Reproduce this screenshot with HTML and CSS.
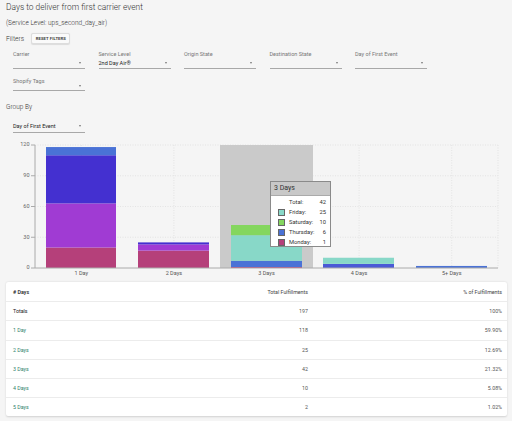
FILE: index.html
```html
<!DOCTYPE html>
<html>
<head>
<meta charset="utf-8">
<link rel="stylesheet" href="styles.css">
</head>
<body>
<div class="page">
  <h1 class="title">Days to deliver from first carrier event</h1>
  <p class="subtitle">(Service Level: ups_second_day_air)</p>
  <div class="filters-head">
    <span class="label-lg">Filters</span>
    <button class="btn">Reset Filters</button>
  </div>
  <div class="filters">
    <div class="field"><span class="field-label">Carrier</span><div class="field-input"><span class="value"></span><span class="arrow"></span></div></div>
    <div class="field"><span class="field-label">Service Level</span><div class="field-input"><span class="value">2nd Day Air®</span><span class="arrow"></span></div></div>
    <div class="field"><span class="field-label">Origin State</span><div class="field-input"><span class="value"></span><span class="arrow"></span></div></div>
    <div class="field"><span class="field-label">Destination State</span><div class="field-input"><span class="value"></span><span class="arrow"></span></div></div>
    <div class="field"><span class="field-label">Day of First Event</span><div class="field-input"><span class="value"></span><span class="arrow"></span></div></div>
    <div class="field field-compact"><span class="field-label">Shopify Tags</span><div class="field-input"><span class="value"></span><span class="arrow"></span></div></div>
  </div>
  <div class="group-by">Group By</div>
  <div class="group-select"><span class="value">Day of First Event</span><span class="arrow"></span></div>
</div>

<div class="chart">
  <svg class="chart-svg" width="512" height="142" viewBox="0 0 512 142">
    <g class="grid">
      <line x1="35" y1="6" x2="498" y2="6"/>
      <line x1="35" y1="36.75" x2="498" y2="36.75"/>
      <line x1="35" y1="67.5" x2="498" y2="67.5"/>
      <line x1="35" y1="98.25" x2="498" y2="98.25"/>
      <line x1="81.3" y1="6" x2="81.3" y2="129"/>
      <line x1="173.9" y1="6" x2="173.9" y2="129"/>
      <line x1="266.5" y1="6" x2="266.5" y2="129"/>
      <line x1="359.1" y1="6" x2="359.1" y2="129"/>
      <line x1="451.7" y1="6" x2="451.7" y2="129"/>
      <line x1="498" y1="6" x2="498" y2="129"/>
    </g>
    <rect x="220" y="6" width="93" height="123" fill="#cacaca"/>
    <!-- 1 Day -->
    <rect x="46" y="108.5" width="70" height="20.5" fill="#b5407a"/>
    <rect x="46" y="64.4" width="70" height="44.1" fill="#a03bd3"/>
    <rect x="46" y="16.25" width="70" height="48.15" fill="#4430d0"/>
    <rect x="46" y="8.05" width="70" height="8.2" fill="#4a72d6"/>
    <!-- 2 Days -->
    <rect x="138" y="111.6" width="71" height="17.4" fill="#b5407a"/>
    <rect x="138" y="105.4" width="71" height="6.2" fill="#a03bd3"/>
    <rect x="138" y="103.4" width="71" height="2" fill="#4430d0"/>
    <!-- 3 Days -->
    <rect x="231" y="128" width="71" height="1" fill="#b5407a"/>
    <rect x="231" y="121.8" width="71" height="6.2" fill="#4a72d6"/>
    <rect x="231" y="96.2" width="71" height="25.6" fill="#88d8c8"/>
    <rect x="231" y="86" width="71" height="10.2" fill="#84d65e"/>
    <!-- 4 Days -->
    <rect x="323" y="124.9" width="71" height="4.1" fill="#4a5ad6"/>
    <rect x="323" y="118.75" width="71" height="6.15" fill="#88d8c8"/>
    <!-- 5+ Days -->
    <rect x="416" y="126.95" width="71" height="2.05" fill="#4a72d6"/>
    <g class="axis">
      <line x1="35" y1="6" x2="35" y2="129"/>
      <line x1="35" y1="129" x2="498" y2="129"/>
      <line x1="31" y1="6" x2="35" y2="6"/>
      <line x1="31" y1="36.75" x2="35" y2="36.75"/>
      <line x1="31" y1="67.5" x2="35" y2="67.5"/>
      <line x1="31" y1="98.25" x2="35" y2="98.25"/>
      <line x1="31" y1="129" x2="35" y2="129"/>
    </g>
    <g class="ylabels">
      <text x="29.5" y="6">120</text>
      <text x="29.5" y="36.75">90</text>
      <text x="29.5" y="67.5">60</text>
      <text x="29.5" y="98.25">30</text>
      <text x="29.5" y="129">0</text>
    </g>
    <g class="xlabels">
      <text x="81.3" y="134.5">1 Day</text>
      <text x="173.9" y="134.5">2 Days</text>
      <text x="266.5" y="134.5">3 Days</text>
      <text x="359.1" y="134.5">4 Days</text>
      <text x="451.7" y="134.5">5+ Days</text>
    </g>
  </svg>
  <div class="tooltip">
    <div class="tooltip-head">3 Days</div>
    <div class="tooltip-body">
      <span></span><span class="tl">Total:</span><span class="tv">42</span>
      <span class="sw sw-fri"></span><span class="tl">Friday:</span><span class="tv">25</span>
      <span class="sw sw-sat"></span><span class="tl">Saturday:</span><span class="tv">10</span>
      <span class="sw sw-thu"></span><span class="tl">Thursday:</span><span class="tv">6</span>
      <span class="sw sw-mon"></span><span class="tl">Monday:</span><span class="tv">1</span>
    </div>
  </div>
</div>

<div class="card">
  <div class="row head"><span># Days</span><span class="num">Total Fulfillments</span><span class="num">% of Fulfillments</span></div>
  <div class="row"><span class="strong">Totals</span><span class="num">197</span><span class="num">100%</span></div>
  <div class="row"><span class="link">1 Day</span><span class="num">118</span><span class="num">59.90%</span></div>
  <div class="row"><span class="link">2 Days</span><span class="num">25</span><span class="num">12.69%</span></div>
  <div class="row"><span class="link">3 Days</span><span class="num">42</span><span class="num">21.32%</span></div>
  <div class="row"><span class="link">4 Days</span><span class="num">10</span><span class="num">5.08%</span></div>
  <div class="row"><span class="link">5 Days</span><span class="num">2</span><span class="num">1.02%</span></div>
</div>
</body>
</html>
```

FILE: styles.css
```css
* { box-sizing: border-box; }
html, body { margin: 0; padding: 0; }
body {
  width: 512px;
  height: 421px;
  overflow: hidden;
  background: #f5f5f5;
  font-family: Roboto, "Liberation Sans", sans-serif;
  color: #333;
}
.page { padding: 0 6px; }
.title {
  margin: 0;
  font-size: 8.4px;
  font-weight: 300;
  line-height: 15px;
  color: #333;
}
.subtitle {
  margin: 0;
  font-size: 6.5px;
  font-weight: 300;
  line-height: 16px;
  color: #333;
}
.filters-head {
  display: flex;
  align-items: center;
  gap: 7px;
  height: 15px;
}
.label-lg { font-size: 6.8px; font-weight: 300; color: #333; }
.btn {
  height: 11px;
  width: 39px;
  padding: 0;
  border: 1px solid #ddd;
  border-radius: 2px;
  background: #fafafa;
  font-family: inherit;
  font-size: 4.2px;
  font-weight: 700;
  letter-spacing: 0.1px;
  text-transform: uppercase;
  color: #444;
  box-shadow: 0 0.5px 1px rgba(0,0,0,0.1);
}
.filters {
  display: grid;
  grid-template-columns: repeat(5, 72px);
  column-gap: 13.5px;
  row-gap: 8px;
  padding: 4px 0 0 7px;
}
.field { display: flex; flex-direction: column; }
.field-label {
  font-size: 5.5px;
  line-height: 8px;
  color: #777;
}
.field-input {
  display: flex;
  align-items: center;
  justify-content: space-between;
  height: 11px;
  border-bottom: 1px solid #a8a8a8;
  padding-right: 4px;
}
.field-compact .field-input { height: 6px; align-items: flex-start; }
.value { font-size: 5.5px; color: #222; }
.arrow {
  width: 0;
  height: 0;
  border-left: 1.6px solid transparent;
  border-right: 1.6px solid transparent;
  border-top: 2px solid #777;
}
.group-by {
  font-size: 6.5px;
  font-weight: 300;
  line-height: 12px;
  margin-top: 10px;
  color: #333;
}
.group-select {
  display: flex;
  align-items: center;
  justify-content: space-between;
  width: 72px;
  height: 14px;
  margin: 6px 0 0 7px;
  padding-right: 4px;
  border-bottom: 1px solid #a8a8a8;
}
.chart {
  position: relative;
  height: 142px;
  margin-top: 6px;
}
.chart-svg { display: block; }
.grid line { stroke: #dcdcdc; stroke-width: 0.7; stroke-dasharray: 1 1.5; }
.axis line { stroke: #aaa; stroke-width: 1; }
.ylabels text {
  font-family: Roboto, sans-serif;
  font-size: 5.5px;
  fill: #666;
  text-anchor: end;
  dominant-baseline: middle;
}
.xlabels text {
  font-family: Roboto, sans-serif;
  font-size: 5.5px;
  fill: #555;
  text-anchor: middle;
  dominant-baseline: middle;
}
.tooltip {
  position: absolute;
  left: 270px;
  top: 42px;
  width: 61px;
  height: 66px;
  border: 1px solid #8a8a8a;
  background: #fff;
  font-size: 5.8px;
  color: #333;
}
.tooltip-head {
  height: 14px;
  line-height: 13px;
  padding-left: 3px;
  background: #c8c8c8;
  border-bottom: 1px solid #aaa;
  font-size: 7px;
}
.tooltip-body {
  display: grid;
  grid-template-columns: 7px 26px 7px;
  column-gap: 4px;
  grid-auto-rows: 10px;
  align-items: center;
  padding: 1px 0 0 7px;
}
.tl { text-align: left; }
.tv { text-align: right; }
.sw { width: 7px; height: 7px; border: 0.5px solid #666; }
.sw-fri { background: #88d8c8; }
.sw-sat { background: #84d65e; }
.sw-thu { background: #4a72d6; }
.sw-mon { background: #b5407a; }
.card {
  margin: 1px 5px 0 6px;
  background: #fff;
  box-shadow: 0 0.5px 2px rgba(0,0,0,0.15);
  border-radius: 2px;
}
.row {
  display: grid;
  grid-template-columns: 1fr 100px 194px;
  align-items: center;
  height: 19.2px;
  padding: 0 5px 0 7px;
  border-top: 1px solid #ececec;
  font-size: 5.3px;
  color: #555;
}
.row.head { border-top: none; color: #222; font-weight: 500; }
.row.head .num { font-weight: 400; color: #444; }
.num { text-align: right; }
.strong { color: #222; }
.link { color: #2f7f6c; }
```
